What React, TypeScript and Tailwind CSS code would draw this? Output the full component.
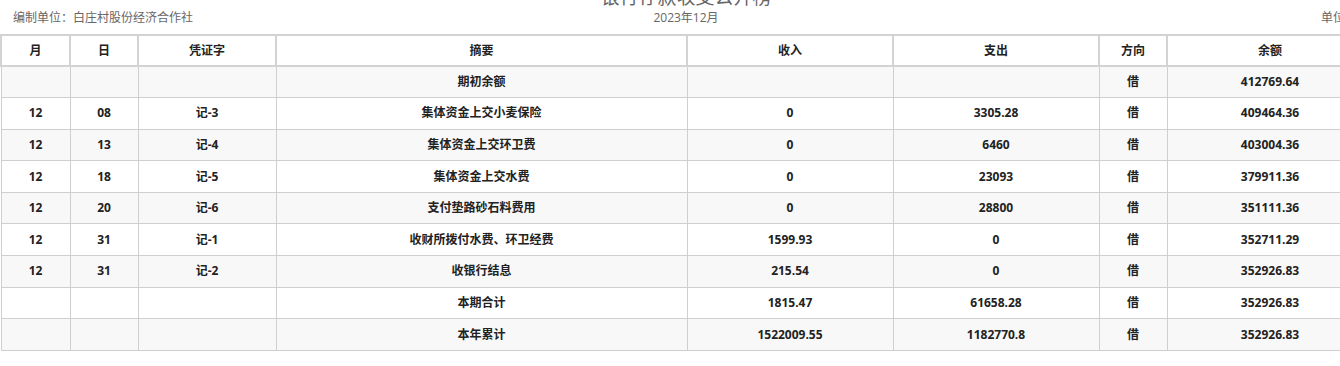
import React from "react";

const rows: string[][] = [
  ["", "", "", "期初余额", "", "", "借", "412769.64"],
  ["12", "08", "记-3", "集体资金上交小麦保险", "0", "3305.28", "借", "409464.36"],
  ["12", "13", "记-4", "集体资金上交环卫费", "0", "6460", "借", "403004.36"],
  ["12", "18", "记-5", "集体资金上交水费", "0", "23093", "借", "379911.36"],
  ["12", "20", "记-6", "支付垫路砂石料费用", "0", "28800", "借", "351111.36"],
  ["12", "31", "记-1", "收财所拨付水费、环卫经费", "1599.93", "0", "借", "352711.29"],
  ["12", "31", "记-2", "收银行结息", "215.54", "0", "借", "352926.83"],
  ["", "", "", "本期合计", "1815.47", "61658.28", "借", "352926.83"],
  ["", "", "", "本年累计", "1522009.55", "1182770.8", "借", "352926.83"],
];

const heads = ["月", "日", "凭证字", "摘要", "收入", "支出", "方向", "余额"];
const widths = ["w-[69px]", "w-[68px]", "w-[138px]", "w-[411px]", "w-[206px]", "w-[206px]", "w-[68px]", "w-[206px]"];

export default function App() {
  return (
    <div
      className="w-[1372px] bg-white overflow-hidden h-[366px]"
      style={{ fontFamily: '"Segoe UI", "Open Sans", "Noto Sans CJK SC", sans-serif' }}
    >
      <div className="-mt-[15px] h-[24px] text-center text-[19px] leading-[24px] text-[#666]">
        银行存款收支公开榜
      </div>
      <div className="relative h-[18px] text-[12px] leading-[18px] text-[#666]">
        <span className="absolute left-[13px] top-0">编制单位：白庄村股份经济合作社</span>
        <div className="text-center">2023年12月</div>
        <span className="absolute right-[3px] top-0">单位：元</span>
      </div>
      <table className="mt-[7px] w-[1372px] border-collapse table-fixed text-[12px] font-bold text-[#222]">
        <colgroup>
          {widths.map((w, i) => (
            <col key={i} className={w} />
          ))}
        </colgroup>
        <thead>
          <tr className="bg-white">
            {heads.map((h, i) => (
              <th
                key={i}
                className="h-[31px] border-2 border-[#d3d3d3] text-center font-bold text-[12px] p-0"
              >
                {h}
              </th>
            ))}
          </tr>
        </thead>
        <tbody>
          {rows.map((r, ri) => (
            <tr key={ri} className={ri % 2 === 0 ? "bg-[#f8f8f8]" : "bg-white"}>
              {r.map((c, ci) => (
                <td
                  key={ci}
                  className="h-[31.6px] border border-[#cfcfcf] text-center p-0 text-[12px]"
                >
                  {c}
                </td>
              ))}
            </tr>
          ))}
        </tbody>
      </table>
    </div>
  );
}
